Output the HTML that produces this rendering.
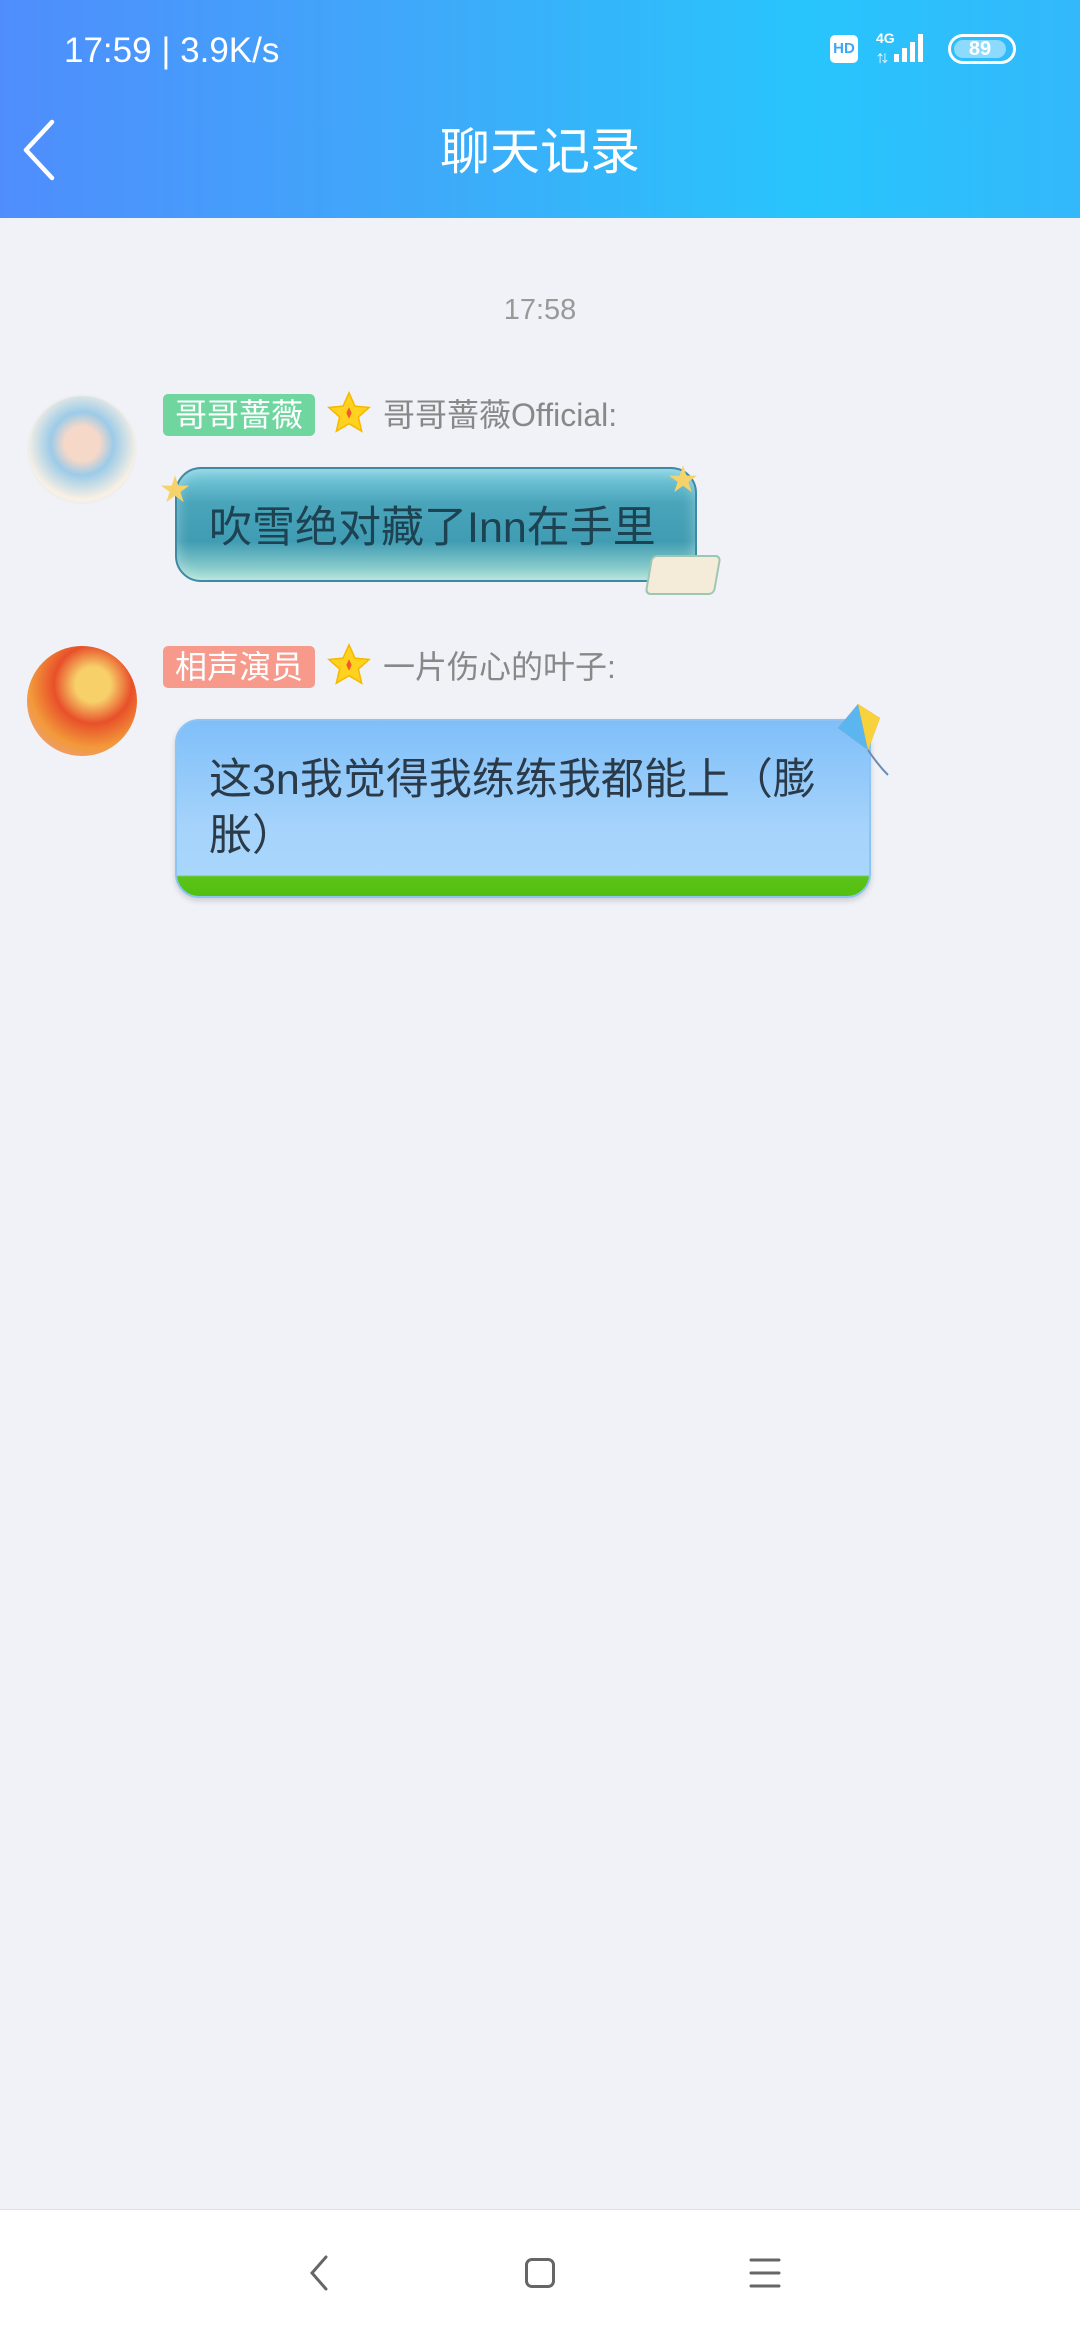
<!DOCTYPE html>
<html><head><meta charset="utf-8"><style>
*{margin:0;padding:0;box-sizing:border-box}
body{width:1080px;height:2340px;background:#f0f2f7;font-family:"Liberation Sans","Noto Sans CJK SC",sans-serif;position:relative;overflow:hidden}
.hdr{position:absolute;left:0;top:0;width:1080px;height:218px;background:linear-gradient(90deg,#4f8dfd 0%,#3eaaf9 40%,#28c5fc 75%,#33b8fb 100%)}
.abs{position:absolute}
.tag{position:absolute;height:42px;border-radius:5px;color:#fff;font-size:32px;line-height:42px;padding:0 12px}
.name{position:absolute;font-size:32px;color:#888;line-height:42px}
.star{position:absolute;width:46px;height:46px}
</style></head><body>
<div class="hdr">
 <div class="abs" style="left:64px;top:30px;color:#fff;font-size:35px;line-height:42px">17:59 <span style="font-weight:300">|</span> 3.9K/s</div>
 <div class="abs" style="left:830px;top:35px;width:28px;height:28px;background:#fff;border-radius:5px;color:#3aa7f8;font-size:15px;font-weight:bold;line-height:28px;text-align:center">HD</div>
 <div class="abs" style="left:876px;top:30px;color:#fff;font-size:14px;font-weight:bold">4G</div>
 <svg class="abs" style="left:876px;top:32px" width="60" height="34"><g fill="#fff"><rect x="18" y="22" width="5" height="8"/><rect x="26" y="16" width="5" height="14"/><rect x="34" y="10" width="5" height="20"/><rect x="42" y="2" width="5" height="28"/></g><text x="1" y="30" fill="#fff" font-size="11">⇅</text></svg>
 <div class="abs" style="left:948px;top:34px;width:68px;height:30px;border:3px solid #fff;border-radius:15px"><div style="margin:3px;height:18px;width:52px;background:rgba(255,255,255,.45);border-radius:9px;color:#fff;font-size:20px;font-weight:bold;line-height:18px;text-align:center">89</div></div>
 <svg class="abs" style="left:18px;top:118px" width="40" height="64"><path d="M34 4 L8 32 L34 60" stroke="#fff" stroke-width="4.5" fill="none" stroke-linecap="round" stroke-linejoin="round"/></svg>
 <div class="abs" style="left:0;width:1080px;top:122px;text-align:center;color:#fff;font-size:50px;line-height:60px">聊天记录</div>
</div>
<div class="abs" style="left:0;width:1080px;top:292px;text-align:center;color:#999;font-size:29px;line-height:36px">17:58</div>

<div class="abs" style="left:27px;top:394px;width:110px;height:110px;border-radius:50%;background:radial-gradient(circle at 50% 45%,#f6d8c8 0 22%,#9ccbe8 40%,#f8f0e4 70%);border:2px solid #eee"></div>
<div class="tag" style="left:163px;top:394px;background:#6fd6a0">哥哥蔷薇</div>
<svg class="star" style="left:326px;top:390px" viewBox="0 0 24 24"><path d="M12 1.5l3.1 6.9 7.4.7-5.6 5 1.7 7.4L12 17.6l-6.6 3.9 1.7-7.4-5.6-5 7.4-.7z" fill="#ffd21f" stroke="#f6b800" stroke-width=".8"/><path d="M12 9l1.4 3L12 15l-1.4-3z" fill="#f05a2a"/></svg>
<div class="name" style="left:383px;top:394px">哥哥蔷薇Official:</div>
<div class="abs" style="left:175px;top:467px;width:522px;height:115px;border-radius:26px;background:linear-gradient(180deg,#7fd0e0 0%,#4aa5bb 30%,#3f9cb2 65%,#a9e0d6 100%);border:2px solid #3e8aa4;box-shadow:inset 0 0 14px rgba(255,255,255,.4)"></div>
<div class="abs" style="left:209px;top:500px;font-size:43px;line-height:56px;color:#1d4252">吹雪绝对藏了Inn在手里</div>
<div class="abs" style="left:160px;top:465px;color:#f5d36a;font-size:30px">★</div>
<div class="abs" style="left:668px;top:455px;color:#f5d36a;font-size:30px">★</div>
<div class="abs" style="left:648px;top:555px;width:70px;height:40px;background:#f4ebd8;border:2px solid #9dc7b0;border-radius:6px;transform:skewX(-10deg)"></div>

<div class="abs" style="left:27px;top:646px;width:110px;height:110px;border-radius:50%;background:radial-gradient(circle at 60% 35%,#f7d06a 0 18%,#e8502a 40%,#f29a3a 65%,#e8a0b0 100%)"></div>
<div class="tag" style="left:163px;top:646px;background:#f79a8c">相声演员</div>
<svg class="star" style="left:326px;top:642px" viewBox="0 0 24 24"><path d="M12 1.5l3.1 6.9 7.4.7-5.6 5 1.7 7.4L12 17.6l-6.6 3.9 1.7-7.4-5.6-5 7.4-.7z" fill="#ffd21f" stroke="#f6b800" stroke-width=".8"/><path d="M12 9l1.4 3L12 15l-1.4-3z" fill="#f05a2a"/></svg>
<div class="name" style="left:383px;top:646px">一片伤心的叶子:</div>
<div class="abs" style="left:175px;top:719px;width:696px;height:179px;border-radius:24px;background:linear-gradient(180deg,#7fbff9 0%,#a5d3fb 60%,#a9d6fb 88%,#5cc318 89%,#52bf10 100%);border:2px solid #8cc4f3;box-shadow:0 3px 6px rgba(0,0,0,.15)"></div>
<div class="abs" style="left:209px;top:752px;width:650px;font-size:43px;line-height:56px;color:#2a3a48">这3n我觉得我练练我都能上（膨胀）</div>
<svg class="abs" style="left:828px;top:700px" width="70" height="80"><path d="M30 4 L52 18 L40 50 L10 28Z" fill="#f36b3a"/><path d="M30 4 L40 50 L10 28Z" fill="#5bb6f0"/><path d="M30 4 L52 18 L40 50Z" fill="#f7d23a"/><path d="M40 50 Q50 65 60 75" stroke="#6a8ab8" stroke-width="2" fill="none"/></svg>

<div class="abs" style="left:0;top:2209px;width:1080px;height:131px;background:#fff;border-top:1px solid #e2e2e2"></div>
<svg class="abs" style="left:300px;top:2252px" width="40" height="42"><path d="M26 5 L12 21 L26 37" stroke="#666" stroke-width="3" fill="none" stroke-linecap="round"/></svg>
<div class="abs" style="left:525px;top:2258px;width:30px;height:30px;border:3px solid #666;border-radius:7px"></div>
<svg class="abs" style="left:748px;top:2256px" width="34" height="34"><g stroke="#666" stroke-width="3" stroke-linecap="round"><path d="M3 4H31M3 17H31M3 30H31"/></g></svg>
</body></html>
